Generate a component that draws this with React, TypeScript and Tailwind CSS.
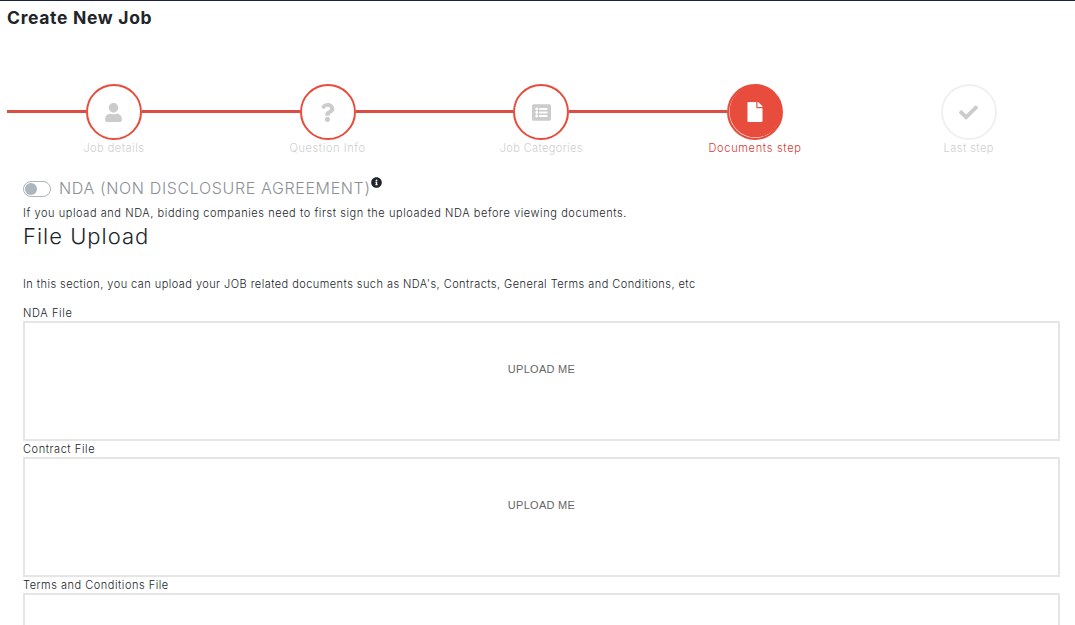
import type { ReactNode } from "react";
import { FaCheck, FaFile, FaInfoCircle, FaListAlt, FaQuestion, FaUser } from "react-icons/fa";

type StepState = "done" | "active" | "pending";

interface StepProps {
  label: string;
  icon: ReactNode;
  state: StepState;
  tracking: string;
}

const circleStyles: Record<StepState, string> = {
  done: "border-2 border-[#e74c3c] bg-white text-[#cccccc]",
  active: "border-2 border-[#e74c3c] bg-[#e74c3c] text-white shadow-[inset_0.5px_-0.5px_0_0_#ffffff]",
  pending: "border-2 border-[#f0f0f0] bg-white text-[#cccccc]",
};

function Step({ label, icon, state, tracking }: StepProps) {
  const before = state === "pending" ? "bg-transparent" : "bg-[#dd4d42]";
  const after = state === "done" ? "bg-[#dd4d42]" : "bg-transparent";
  return (
    <li className="flex flex-col">
      <div className="flex items-center">
        <span className={`-mt-px h-[3px] flex-1 ${before}`} />
        <span className={`flex size-14 items-center justify-center rounded-full ${circleStyles[state]}`}>{icon}</span>
        <span className={`-mt-px h-[3px] flex-1 ${after}`} />
      </div>
      <span
        className={`text-center text-[11px] leading-4 font-light ${tracking} ${
          state === "active" ? "text-[#d63a35]" : "text-[#cfcfcf]"
        }`}
      >
        {label}
      </span>
    </li>
  );
}

interface UploadFieldProps {
  label: string;
  tracking: string;
  prompt?: string;
}

function UploadField({ label, tracking, prompt }: UploadFieldProps) {
  return (
    <div>
      <div className={`h-4 text-[11px] leading-4 font-light text-[#212529] ${tracking}`}>{label}</div>
      <button
        type="button"
        className="flex h-[120px] w-full justify-center border-2 border-[#e5e5e5] pt-[38px] font-['Liberation_Sans',sans-serif] text-[11px] leading-4 tracking-[0.28px] text-[#666666]"
      >
        {prompt}
      </button>
    </div>
  );
}

export default function App() {
  return (
    <div className="h-[625px] overflow-hidden border-t border-[#1b2340] bg-white font-['Inter',sans-serif] text-[#212529]">
      <h1 className="pt-[5px] pl-[7px] text-[17.5px] leading-6 font-bold tracking-[0.68px]">Create New Job</h1>

      <ol className="mt-[54px] -mr-[0.6px] grid grid-cols-5 pl-[7px]">
        <Step label="Job details" state="done" tracking="tracking-[0.48px]" icon={<FaUser className="size-[19px]" />} />
        <Step label="Question Info" state="done" tracking="tracking-[0.6px]" icon={<FaQuestion className="size-[19px]" />} />
        <Step label="Job Categories" state="done" tracking="tracking-[0.37px]" icon={<FaListAlt className="size-[19px]" />} />
        <Step label="Documents step" state="active" tracking="tracking-[0.7px]" icon={<FaFile className="size-5" />} />
        <Step label="Last step" state="pending" tracking="tracking-[0.45px]" icon={<FaCheck className="size-[19px]" />} />
      </ol>

      <main className="pr-[15px] pl-[23px]">
        <div className="mt-5 flex h-6 items-center">
          <span className="mt-0.5 flex h-4 w-7 items-center rounded-full border border-[#adb5bd] px-px">
            <span className="size-3 rounded-full bg-[#adb5bd]" />
          </span>
          <span className="ml-2 text-base font-light tracking-[0.64px] whitespace-nowrap text-[#8b9095]">
            NDA (NON DISCLOSURE AGREEMENT)
          </span>
          <FaInfoCircle className="-mt-[11px] size-[11px]" />
        </div>
        <p className="mt-[5px] text-[11px] leading-4 font-light tracking-[0.565px] whitespace-nowrap text-[#212529]">
          If you upload and NDA, bidding companies need to first sign the uploaded NDA before viewing documents.
        </p>
        <h2 className="mt-px text-[22px] leading-7 font-light tracking-[1px]">File Upload</h2>
        <p className="mt-[26px] text-[11px] leading-4 font-light tracking-[0.443px] whitespace-nowrap text-[#212529]">
          In this section, you can upload your JOB related documents such as NDA's, Contracts, General Terms and
          Conditions, etc
        </p>
        <div className="mt-[13px]">
          <UploadField label="NDA File" tracking="tracking-[0.62px]" prompt="UPLOAD ME" />
          <UploadField label="Contract File" tracking="tracking-[0.56px]" prompt="UPLOAD ME" />
          <UploadField label="Terms and Conditions File" tracking="tracking-[0.51px]" />
        </div>
      </main>
    </div>
  );
}
